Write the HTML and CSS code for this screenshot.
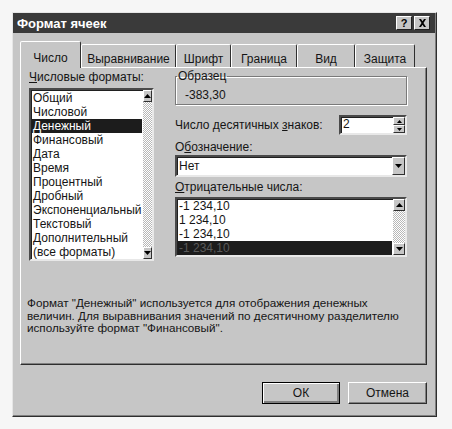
FILE: index.html
```html
<!DOCTYPE html>
<html lang="ru">

<head>
  <meta charset="UTF-8">
  <title>Формат ячеек</title>
  <link rel="stylesheet" href="styles.css">
</head>

<body>
  <div class="dialog">
    <div class="titlebar">
      <span class="title">Формат ячеек</span>
      <div class="caption-buttons">
        <span class="cap-btn help">?</span>
        <span class="cap-btn">
          <svg width="9" height="8" viewBox="0 0 9 8"><path d="M1 0h2l1.5 2.2L6 0h2L5.5 4 8 8H6L4.5 5.8 3 8H1l2.5-4z" fill="#000"/></svg>
        </span>
      </div>
    </div>

    <div class="content">
      <div class="tabs">
        <div class="tab active t1">Число</div>
        <div class="tab t2">Выравнивание</div>
        <div class="tab t3">Шрифт</div>
        <div class="tab t4">Граница</div>
        <div class="tab t5">Вид</div>
        <div class="tab t6">Защита</div>
      </div>

      <div class="panel">
        <div class="columns">
          <div class="col-left">
            <div class="label"><u>Ч</u>исловые форматы:</div>
            <div class="listbox formats">
              <ul class="items">
                <li>Общий</li>
                <li>Числовой</li>
                <li class="selected">Денежный</li>
                <li>Финансовый</li>
                <li>Дата</li>
                <li>Время</li>
                <li>Процентный</li>
                <li>Дробный</li>
                <li>Экспоненциальный</li>
                <li>Текстовый</li>
                <li>Дополнительный</li>
                <li>(все форматы)</li>
              </ul>
              <div class="scrollbar">
                <span class="arrow-btn"><svg width="7" height="4" viewBox="0 0 7 4"><path d="M3.5 0L7 4H0z" fill="#000"/></svg></span>
                <span class="track"></span>
                <span class="arrow-btn"><svg width="7" height="4" viewBox="0 0 7 4"><path d="M0 0h7L3.5 4z" fill="#000"/></svg></span>
              </div>
            </div>
          </div>

          <div class="col-right">
            <fieldset class="sample">
              <legend>Образец</legend>
              <div class="sample-value">-383,30</div>
            </fieldset>

            <div class="decimals">
              <span>Число десятичных <u>з</u>наков:</span>
              <div class="spinner">
                <span class="spin-value">2</span>
                <div class="spin-btns">
                  <span class="spin-btn"><svg width="5" height="3" viewBox="0 0 5 3"><path d="M2.5 0L5 3H0z" fill="#000"/></svg></span>
                  <span class="spin-btn"><svg width="5" height="3" viewBox="0 0 5 3"><path d="M0 0h5L2.5 3z" fill="#000"/></svg></span>
                </div>
              </div>
            </div>

            <div class="label label-symbol">О<u>б</u>означение:</div>
            <div class="combo">
              <span class="combo-value">Нет</span>
              <span class="drop-btn"><svg width="7" height="4" viewBox="0 0 7 4"><path d="M0 0h7L3.5 4z" fill="#000"/></svg></span>
            </div>

            <div class="label label-negative"><u>О</u>трицательные числа:</div>
            <div class="listbox negatives">
              <ul class="items">
                <li>-1 234,10</li>
                <li>1 234,10</li>
                <li>-1 234,10</li>
                <li class="selected dim">-1 234,10</li>
              </ul>
              <div class="scrollbar">
                <span class="arrow-btn"><svg width="7" height="4" viewBox="0 0 7 4"><path d="M3.5 0L7 4H0z" fill="#000"/></svg></span>
                <span class="track"></span>
                <span class="arrow-btn"><svg width="7" height="4" viewBox="0 0 7 4"><path d="M0 0h7L3.5 4z" fill="#000"/></svg></span>
              </div>
            </div>
          </div>
        </div>

        <p class="description">
          Формат "Денежный" используется для отображения денежных<br>
          величин. Для выравнивания значений по десятичному разделителю<br>
          используйте формат "Финансовый".
        </p>
      </div>

      <div class="buttons">
        <button class="btn default">ОК</button>
        <button class="btn">Отмена</button>
      </div>
    </div>
  </div>
</body>

</html>
```

FILE: styles.css
```css
* {
  margin: 0px;
  padding: 0px;
  box-sizing: border-box;
}

body {
  background-color: #f6f6f6;
  font-family: "Liberation Sans", Arial, sans-serif;
  font-size: 12px;
  color: #151515;
}

ul {
  list-style: none;
}

.dialog {
  width: 425px;
  height: 405px;
  margin: 12px 0 0 12px;
  background-color: #c6c6c6;
  border: 1px solid;
  border-color: #e6e6e6 #2e2e2e #2e2e2e #e6e6e6;
  box-shadow: inset -1px -1px 0 #808080;
  display: flex;
  flex-direction: column;
}

.titlebar {
  height: 20px;
  background-color: #3a3a3a;
  display: flex;
  align-items: center;
  justify-content: space-between;
  padding: 0 5px 0 4px;
  margin-right: 1px;
}

.title {
  color: #fff;
  font-weight: bold;
  font-size: 13px;
}

.caption-buttons {
  display: flex;
  gap: 2px;
}

.cap-btn {
  width: 16px;
  height: 14px;
  background-color: #c6c6c6;
  border: 1px solid;
  border-color: #fff #202020 #202020 #fff;
  display: flex;
  align-items: center;
  justify-content: center;
  font-weight: bold;
  font-size: 11px;
  color: #000;
}

.content {
  flex: 1;
  display: flex;
  flex-direction: column;
  padding: 8px 9px 0 7px;
}

/* tabs */
.tabs {
  display: flex;
  align-items: flex-end;
  height: 26px;
  position: relative;
  z-index: 1;
}

.tab {
  height: 23px;
  padding-top: 5px;
  border: 1px solid;
  border-bottom: none;
  border-color: #fff #303030 transparent #fff;
  border-radius: 2px 2px 0 0;
  display: flex;
  align-items: center;
  justify-content: center;
  background-color: #c6c6c6;
}

.tab.active {
  height: 27px;
  margin-bottom: -1px;
  padding-top: 6px;
}

.t1 { width: 61px; }
.t2 { width: 95px; }
.t3 { width: 55px; }
.t4 { width: 66px; }
.t5 { width: 58px; }
.t6 { width: 60px; }

.panel {
  width: 407px;
  height: 298px;
  border: 1px solid;
  border-color: #fff #2e2e2e #2e2e2e #fff;
  box-shadow: inset -1px -1px 0 #808080;
  padding: 2px 19px 0 8px;
}

.columns {
  display: flex;
  gap: 21px;
}

.col-left {
  width: 125px;
}

.col-right {
  width: 232px;
}

.label {
  line-height: 14px;
  height: 14px;
}

/* list boxes */
.listbox {
  display: flex;
  background-color: #fff;
  border: 2px solid;
  border-color: #4a4a4a #e8e8e8 #e8e8e8 #4a4a4a;
  box-shadow: inset 1px 1px 0 #202020;
}

.formats {
  margin-top: 4px;
  height: 173px;
}

.items {
  flex: 1;
  padding: 1px 1px 0 1px;
}

.items li {
  line-height: 14px;
  height: 14px;
  padding-left: 1px;
  white-space: nowrap;
}

.items li.selected {
  background-color: #1c1c1c;
  color: #fff;
}

.items li.dim {
  color: #5a5a5a;
}

.scrollbar {
  width: 12px;
  display: flex;
  flex-direction: column;
}

.arrow-btn {
  height: 12px;
  background-color: #c6c6c6;
  border: 1px solid;
  border-color: #fff #303030 #303030 #fff;
  display: flex;
  align-items: center;
  justify-content: center;
}

.track {
  flex: 1;
  background-image: repeating-conic-gradient(#fff 0 25%, #b8b8b8 0 50%);
  background-size: 2px 2px;
}

/* right column */
.sample {
  height: 36px;
  border: 1px solid #7a7a7a;
  box-shadow: inset 1px 1px 0 #fff, 1px 1px 0 #fff;
  padding: 0 0 0 9px;
  margin-top: -1px;
}

.sample legend {
  line-height: 14px;
  margin-left: -8px;
  padding: 0 1px;
}

.sample-value {
  line-height: 14px;
  margin-top: 5px;
}

.decimals {
  display: flex;
  align-items: center;
  justify-content: space-between;
  margin-top: 10px;
  height: 20px;
}

.spinner {
  width: 68px;
  height: 20px;
  display: flex;
  background-color: #fff;
  border: 2px solid;
  border-color: #4a4a4a #e8e8e8 #e8e8e8 #4a4a4a;
  box-shadow: inset 1px 1px 0 #202020;
}

.spin-value {
  flex: 1;
  line-height: 15px;
  padding-left: 2px;
}

.spin-btns {
  width: 12px;
  display: flex;
  flex-direction: column;
}

.spin-btn {
  flex: 1;
  background-color: #c6c6c6;
  border: 1px solid;
  border-color: #fff #303030 #303030 #fff;
  display: flex;
  align-items: center;
  justify-content: center;
}

.label-symbol {
  margin-top: 5px;
}

.combo {
  margin-top: 1px;
  height: 22px;
  display: flex;
  align-items: stretch;
  background-color: #fff;
  border: 2px solid;
  border-color: #4a4a4a #e8e8e8 #e8e8e8 #4a4a4a;
  box-shadow: inset 1px 1px 0 #202020;
}

.combo-value {
  flex: 1;
  line-height: 18px;
  padding-left: 2px;
}

.drop-btn {
  width: 13px;
  background-color: #c6c6c6;
  border: 1px solid;
  border-color: #fff #303030 #303030 #fff;
  display: flex;
  align-items: center;
  justify-content: center;
}

.label-negative {
  margin-top: 3px;
}

.negatives {
  margin-top: 3px;
  height: 60px;
}

.negatives .items {
  padding-top: 0;
}

.description {
  margin-top: 36px;
  margin-left: -2px;
  font-size: 11.7px;
  line-height: 12.5px;
  white-space: nowrap;
}

/* dialog buttons */
.buttons {
  display: flex;
  justify-content: flex-end;
  gap: 8px;
  margin-top: 17px;
}

.btn {
  width: 79px;
  height: 22px;
  font-family: "Liberation Sans", Arial, sans-serif;
  font-size: 12px;
  color: #151515;
  background-color: #c6c6c6;
  border: 1px solid;
  border-color: #fff #2e2e2e #2e2e2e #fff;
  box-shadow: inset -1px -1px 0 #808080;
}

.btn.default {
  width: 78px;
  border: 1px solid #000;
  box-shadow: inset 1px 1px 0 #fff, inset -2px -2px 0 #808080;
}
```
